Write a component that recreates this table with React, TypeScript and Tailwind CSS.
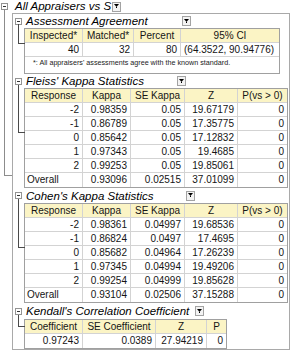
import React from "react";

const LINE = "border-[#d3d3d3]";

const Minus = () => (
  <div className="w-[7px] h-[7px] shrink-0 border border-[#939393] bg-white flex items-center justify-center">
    <div className="w-[3px] h-px bg-[#333]" />
  </div>
);

const DropBtn = () => (
  <div className="w-[9px] h-[10px] shrink-0 border border-[#a3a3a3] bg-[#f3f3f3] flex items-center justify-center">
    <svg width="5" height="5" viewBox="0 0 5 5">
      <path d="M0 0h5L2.5 3z" fill="#000" />
      <rect x="2" y="3" width="1" height="1" fill="#000" />
    </svg>
  </div>
);

type Row = string[];

const Table = ({
  widths,
  header,
  rows,
  note,
}: {
  widths: string[];
  header: string[];
  rows: Row[];
  note?: string;
}) => {
  return (
    <div className="ml-[11px] w-fit border border-[#a0a0a0] text-[10px] text-[#151515]">
      <div className={`flex h-[14px] leading-[13px] border-b ${LINE} bg-[#fbf4c5]`}>
        {header.map((h, i) => (
          <div key={i} className={`${widths[i]} text-center whitespace-nowrap ${i > 0 ? `border-l ${LINE}` : ""}`}>
            {h}
          </div>
        ))}
      </div>
      {rows.map((r, ri) => (
        <div
          key={ri}
          className={`flex h-[14px] leading-[13px] ${ri < rows.length - 1 || note ? `border-b ${LINE}` : ""}`}
        >
          {r.map((c, i) => (
            <div
              key={i}
              className={`${widths[i]} whitespace-nowrap ${i > 0 ? `border-l ${LINE}` : ""} ${
                c === "Overall" ? "pl-[2px] text-left" : c.startsWith("(") ? "pl-[3px] text-left" : "pr-[3px] text-right"
              }`}
            >
              {c}
            </div>
          ))}
        </div>
      ))}
      {note && (
        <div className="h-[16px] pl-[8px] pt-[1px] text-[7.2px] leading-[9px] text-[#222] whitespace-nowrap">{note}</div>
      )}
    </div>
  );
};

const Section = ({
  title,
  titleW,
  headH,
  lineTop,
  lineH,
  children,
}: {
  title: string;
  titleW: string;
  headH: string;
  lineTop: string;
  lineH: string;
  children: React.ReactNode;
}) => (
  <div className="relative">
    <div className={`flex items-center pl-[2px] ${headH}`}>
      <Minus />
      <span className={`ml-[4px] ${titleW} italic text-[11.5px] leading-[14px] text-black whitespace-nowrap`}>{title}</span>
      <DropBtn />
    </div>
    <div className={`absolute left-[5px] w-[7px] border-l border-b border-[#4a4a4a] ${lineTop} ${lineH}`} />
    {children}
  </div>
);

const kappaW = ["w-[57px]", "w-[48px]", "w-[54px]", "w-[53px]", "w-[50px]"];
const kappaHead = ["Response", "Kappa", "SE Kappa", "Z", "P(vs > 0)"];

const fleiss: Row[] = [
  ["-2", "0.98359", "0.05", "19.67179", "0"],
  ["-1", "0.86789", "0.05", "17.35775", "0"],
  ["0", "0.85642", "0.05", "17.12832", "0"],
  ["1", "0.97343", "0.05", "19.4685", "0"],
  ["2", "0.99253", "0.05", "19.85061", "0"],
  ["Overall", "0.93096", "0.02515", "37.01099", "0"],
];

const cohen: Row[] = [
  ["-2", "0.98361", "0.04997", "19.68536", "0"],
  ["-1", "0.86824", "0.0497", "17.4695", "0"],
  ["0", "0.85682", "0.04964", "17.26239", "0"],
  ["1", "0.97345", "0.04994", "19.49206", "0"],
  ["2", "0.99254", "0.04999", "19.85628", "0"],
  ["Overall", "0.93104", "0.02506", "37.15288", "0"],
];

export default function App() {
  return (
    <div
      className="relative w-[300px] h-[353px] overflow-hidden bg-white"
      style={{ fontFamily: '"Liberation Sans", Arial, sans-serif' }}
    >
      {/* top level node */}
      <div className="flex items-center h-[13px] pl-[1px]">
        <Minus />
        <span className="ml-[7px] w-[97px] italic text-[11.5px] leading-[13px] text-black whitespace-nowrap">
          All Appraisers vs S
        </span>
        <DropBtn />
      </div>
      <div className="absolute left-[4px] top-[9px] w-[8px] h-[167px] border-l border-b border-[#8c8c8c]" />

      <div className="ml-[12px] w-[278px] h-[337px] border border-[#a9a9a9]">
        <Section title="Assessment Agreement" titleW="w-[156px]" headH="h-[14px]" lineTop="top-[10px]" lineH="h-[20px]">
          <Table
            widths={["w-[57px]", "w-[51px]", "w-[47px]", "w-[99px]"]}
            header={["Inspected*", "Matched*", "Percent", "95% CI"]}
            rows={[["40", "32", "80", "(64.3522, 90.94776)"]]}
            note="*: All appraisers' assessments agree with the known standard."
          />
        </Section>

        <Section title="Fleiss' Kappa Statistics" titleW="w-[151px]" headH="h-[14px]" lineTop="top-[11px]" lineH="h-[48px]">
          <Table widths={kappaW} header={kappaHead} rows={fleiss} />
        </Section>

        <Section title="Cohen's Kappa Statistics" titleW="w-[160px]" headH="h-[15px]" lineTop="top-[11px]" lineH="h-[49px]">
          <Table widths={kappaW} header={kappaHead} rows={cohen} />
        </Section>

        <Section
          title="Kendall's Correlation Coefficient"
          titleW="w-[169px]"
          headH="h-[16px]"
          lineTop="top-[12px]"
          lineH="h-[12px]"
        >
          <Table
            widths={["w-[57px]", "w-[73px]", "w-[51px]", "w-[20px]"]}
            header={["Coefficient", "SE Coefficient", "Z", "P"]}
            rows={[["0.97243", "0.0389", "27.94219", "0"]]}
          />
        </Section>
      </div>
    </div>
  );
}
